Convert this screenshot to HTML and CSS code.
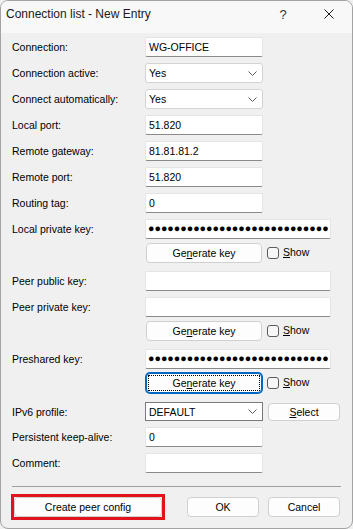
FILE: index.html
```html
<!DOCTYPE html>
<html>
<head>
<meta charset="utf-8">
<link rel="stylesheet" href="styles.css">
</head>
<body>
<div class="window">
  <div class="titlebar">
    <span class="title">Connection list - New Entry</span>
    <span class="tbtn help">?</span>
    <span class="tbtn close"><svg width="10" height="10" viewBox="0 0 10 10"><path d="M0.5 0.5 L9.5 9.5 M9.5 0.5 L0.5 9.5" stroke="#1a1a1a" stroke-width="1" fill="none"/></svg></span>
  </div>
  <div class="content">
    <div class="form">
      <div class="label">Connection:</div>
      <div class="field"><div class="input">WG-OFFICE</div></div>

      <div class="label">Connection active:</div>
      <div class="field"><div class="select"><span>Yes</span><svg class="chev" width="9" height="5" viewBox="0 0 9 5"><path d="M0.5 0.5 L4.5 4.5 L8.5 0.5" stroke="#606060" stroke-width="1" fill="none"/></svg></div></div>

      <div class="label">Connect automatically:</div>
      <div class="field"><div class="select"><span>Yes</span><svg class="chev" width="9" height="5" viewBox="0 0 9 5"><path d="M0.5 0.5 L4.5 4.5 L8.5 0.5" stroke="#606060" stroke-width="1" fill="none"/></svg></div></div>

      <div class="label">Local port:</div>
      <div class="field"><div class="input">51.820</div></div>

      <div class="label">Remote gateway:</div>
      <div class="field"><div class="input">81.81.81.2</div></div>

      <div class="label">Remote port:</div>
      <div class="field"><div class="input">51.820</div></div>

      <div class="label">Routing tag:</div>
      <div class="field"><div class="input">0</div></div>

      <div class="label">Local private key:</div>
      <div class="field"><div class="input wide dots">●●●●●●●●●●●●●●●●●●●●●●●●●●●●</div></div>

      <div class="label key-gap"></div>
      <div class="field keyrow"><div class="btn genbtn">Ge<u>n</u>erate key</div><span class="check"></span><span class="show"><u>S</u>how</span></div>

      <div class="label after-key">Peer public key:</div>
      <div class="field after-key"><div class="input wide"></div></div>

      <div class="label">Peer private key:</div>
      <div class="field"><div class="input wide"></div></div>

      <div class="label key-gap"></div>
      <div class="field keyrow"><div class="btn genbtn">Ge<u>n</u>erate key</div><span class="check"></span><span class="show"><u>S</u>how</span></div>

      <div class="label after-key">Preshared key:</div>
      <div class="field after-key"><div class="input wide dots">●●●●●●●●●●●●●●●●●●●●●●●●●●●●</div></div>

      <div class="label key-gap"></div>
      <div class="field keyrow"><div class="btn genbtn focused">Ge<u>n</u>erate key</div><span class="check"></span><span class="show"><u>S</u>how</span></div>

      <div class="label after-key2">IPv6 profile:</div>
      <div class="field after-key2 iprow"><div class="select combo"><span>DEFAULT</span><svg class="chev" width="9" height="5" viewBox="0 0 9 5"><path d="M0.5 0.5 L4.5 4.5 L8.5 0.5" stroke="#606060" stroke-width="1" fill="none"/></svg></div><div class="btn selbtn"><u>S</u>elect</div></div>

      <div class="label">Persistent keep-alive:</div>
      <div class="field"><div class="input">0</div></div>

      <div class="label">Comment:</div>
      <div class="field"><div class="input"></div></div>
    </div>
    <div class="sep"></div>
    <div class="footer">
      <span class="mark"><span class="btn peerbtn">Create peer config</span></span>
      <span class="right">
        <span class="btn okbtn">OK</span>
        <span class="btn okbtn">Cancel</span>
      </span>
    </div>
  </div>
</div>
</body>
</html>
```

FILE: styles.css
```css
html, body {
  margin: 0;
  padding: 0;
  background: #f0f0f0;
}
body {
  font-family: "Liberation Sans", Arial, sans-serif;
  color: #000;
}
.window {
  width: 353px;
  height: 529px;
  box-sizing: border-box;
  border: 1px solid #a3a3a3;
  border-radius: 8px;
  background: #f0f0f0;
  overflow: hidden;
  display: flex;
  flex-direction: column;
}
.titlebar {
  height: 26px;
  padding-bottom: 6px;
  background: #f8f8f8;
  display: flex;
  align-items: center;
  padding-left: 5px;
  font-size: 12px;
  color: #1a1a1a;
}
.title {
  flex: 1;
}
.tbtn {
  width: 46px;
  display: flex;
  align-items: center;
  justify-content: center;
}
.help {
  font-size: 13px;
  color: #333;
}
.close svg {
  display: block;
}
.content {
  padding: 4px 11px 0 11px;
  font-size: 10.5px;
}
.form {
  display: grid;
  grid-template-columns: 133px auto;
  row-gap: 6px;
  align-items: center;
}
.label {
  white-space: nowrap;
}
.field {
  display: flex;
  align-items: center;
}
.key-gap, .keyrow {
  margin-top: -2px;
}
.after-key {
  margin-top: 2px;
}
.after-key2 {
  margin-top: 3px;
}
.input {
  width: 118px;
  height: 20px;
  box-sizing: border-box;
  background: #fff;
  border: 1px solid #e5e5e5;
  border-bottom-color: #8a8a8a;
  border-radius: 2px;
  padding-left: 3px;
  line-height: 18px;
  white-space: nowrap;
  overflow: hidden;
}
.input.wide {
  width: 186px;
}
.dots {
  font-family: "Liberation Mono", monospace;
  font-size: 10.75px;
  letter-spacing: 0;
  padding-left: 2px;
}
.select {
  width: 118px;
  height: 20px;
  box-sizing: border-box;
  background: #fff;
  border: 1px solid #d3d3d3;
  border-radius: 3px;
  padding: 0 0 0 3px;
  display: flex;
  align-items: center;
  justify-content: space-between;
}
.chev {
  margin-right: 5px;
  display: block;
}
.select.combo {
  border-color: #7a7a7a;
  border-radius: 0;
  height: 19px;
}
.btn {
  box-sizing: border-box;
  background: #fdfdfd;
  border: 1px solid #d0d0d0;
  border-radius: 4px;
  display: flex;
  align-items: center;
  justify-content: center;
  height: 20px;
  position: relative;
}
.genbtn {
  width: 116px;
  margin-left: 1px;
}
.genbtn.focused {
  border: 1px solid #0067c0;
  box-shadow: 0 0 0 1px #0067c0;
}
.genbtn.focused::after {
  content: "";
  position: absolute;
  left: 1px;
  top: 1px;
  right: 1px;
  bottom: 1px;
  border: 1px dotted #000;
}
.check {
  width: 12px;
  height: 12px;
  box-sizing: border-box;
  border: 1px solid #5b5b5b;
  border-radius: 3px;
  background: #f7f7f7;
  margin-left: 5px;
}
.show {
  margin-left: 4px;
  margin-top: -3px;
}
.iprow .selbtn {
  width: 72px;
  height: 18px;
  margin-left: 5px;
}
.sep {
  height: 1px;
  background: #a0a0a0;
  margin-top: 13px;
}
.footer {
  display: flex;
  justify-content: space-between;
  margin-top: 10px;
  padding-right: 1px;
}
.mark {
  display: flex;
  margin-left: 2px;
  outline: 3px solid #e3131d;
  outline-offset: 0;
}
.peerbtn {
  width: 148px;
}
.right {
  display: flex;
  gap: 9px;
}
.okbtn {
  width: 72px;
}
u {
  text-decoration-thickness: 1px;
  text-underline-offset: 1px;
}
```
